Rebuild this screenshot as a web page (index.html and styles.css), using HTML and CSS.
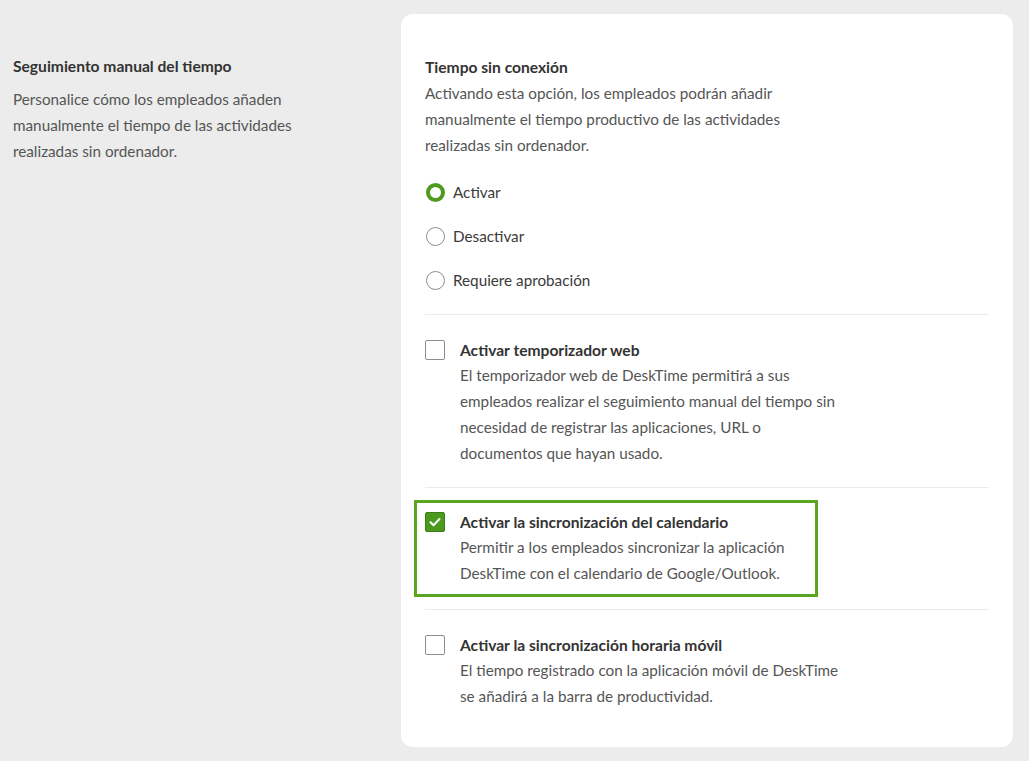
FILE: index.html
```html
<!DOCTYPE html>
<html lang="es">
<head>
<meta charset="utf-8">
<title>Seguimiento manual del tiempo</title>
<link rel="stylesheet" href="styles.css">
</head>
<body>
<div class="page">
  <aside class="intro">
    <h2 class="intro-title">Seguimiento manual del tiempo</h2>
    <p class="intro-text">Personalice cómo los empleados añaden<br>manualmente el tiempo de las actividades<br>realizadas sin ordenador.</p>
  </aside>

  <section class="card">
    <div class="group">
      <h3 class="opt-title">Tiempo sin conexión</h3>
      <p class="opt-text">Activando esta opción, los empleados podrán añadir<br>manualmente el tiempo productivo de las actividades<br>realizadas sin ordenador.</p>
      <div class="radios">
        <label class="radio"><span class="radio-dot checked"></span><span>Activar</span></label>
        <label class="radio"><span class="radio-dot"></span><span>Desactivar</span></label>
        <label class="radio"><span class="radio-dot"></span><span>Requiere aprobación</span></label>
      </div>
    </div>

    <div class="option">
      <span class="check"></span>
      <div class="option-body">
        <h3 class="opt-title">Activar temporizador web</h3>
        <p class="opt-text">El temporizador web de DeskTime permitirá a sus<br>empleados realizar el seguimiento manual del tiempo sin<br>necesidad de registrar las aplicaciones, URL o<br>documentos que hayan usado.</p>
      </div>
    </div>

    <div class="option option-boxed">
      <div class="highlight">
        <span class="check checked">
          <svg viewBox="0 0 20 20" width="20" height="20"><path d="M5.5 10.3l3 3 6-6.3" fill="none" stroke="#fff" stroke-width="2" stroke-linecap="round" stroke-linejoin="round"/></svg>
        </span>
        <div class="option-body">
          <h3 class="opt-title">Activar la sincronización del calendario</h3>
          <p class="opt-text">Permitir a los empleados sincronizar la aplicación<br>DeskTime con el calendario de Google/Outlook.</p>
        </div>
      </div>
    </div>

    <div class="option">
      <span class="check"></span>
      <div class="option-body">
        <h3 class="opt-title">Activar la sincronización horaria móvil</h3>
        <p class="opt-text">El tiempo registrado con la aplicación móvil de DeskTime<br>se añadirá a la barra de productividad.</p>
      </div>
    </div>
  </section>
</div>
</body>
</html>
```

FILE: styles.css
```css
* { box-sizing: border-box; }

html, body {
  margin: 0;
  padding: 0;
  background: #ebeceb;
}

body {
  font-family: Lato, "Noto Sans", sans-serif;
  font-size: 15.25px;
  color: #3a3a3a;
}

.page {
  display: flex;
  align-items: flex-start;
  padding: 14px 16px 14px 13px;
}

.intro {
  flex: 0 0 388px;
  padding-top: 39px;
}

.intro-title {
  margin: 0;
  font-size: 15.6px;
  line-height: 26px;
  font-weight: 700;
  color: #333;
}

.intro-text {
  margin: 7px 0 0;
  line-height: 26px;
  color: #555;
  white-space: nowrap;
}

.card {
  flex: 0 0 612px;
  height: 733px;
  background: #fff;
  border-radius: 12px;
  padding: 40px 24px 0 24px;
}

.opt-title {
  margin: 0;
  font-size: 15.6px;
  line-height: 26px;
  font-weight: 700;
  color: #333;
}

.opt-text {
  margin: 0;
  line-height: 26px;
  color: #555;
  white-space: nowrap;
}

.group {
  padding-bottom: 21px;
}

.radios {
  display: flex;
  flex-direction: column;
  gap: 18px;
  margin-top: 21px;
}

.radio {
  display: flex;
  align-items: center;
  gap: 8px;
  line-height: 26px;
  color: #3a3a3a;
}

.radio-dot {
  width: 19px;
  height: 19px;
  border-radius: 50%;
  border: 1px solid #8d8d8d;
  background: #fff;
  margin-left: 1px;
}

.radio-dot.checked {
  border: 4.5px solid #4f9a1f;
}

.option {
  display: flex;
  gap: 15px;
  border-top: 1px solid #ebebeb;
  padding: 23px 0 21px;
}

.option .opt-title {
  line-height: 24px;
}

.option-boxed {
  display: block;
  padding: 12px 0 12px;
}

.highlight {
  display: flex;
  gap: 15px;
  width: 404px;
  margin-left: -11px;
  border: 3px solid #5aa623;
  padding: 7px 0 8px 8px;
}

.check {
  flex: 0 0 20px;
  width: 20px;
  height: 20px;
  margin-top: 2px;
  border: 1px solid #8d8d8d;
  border-radius: 2px;
  background: #fff;
}

.check.checked {
  margin-top: 2px;
  border-color: #3b7d16;
  background: #4c9a1d;
  display: flex;
}

.check.checked svg {
  margin: -1px;
}
```
